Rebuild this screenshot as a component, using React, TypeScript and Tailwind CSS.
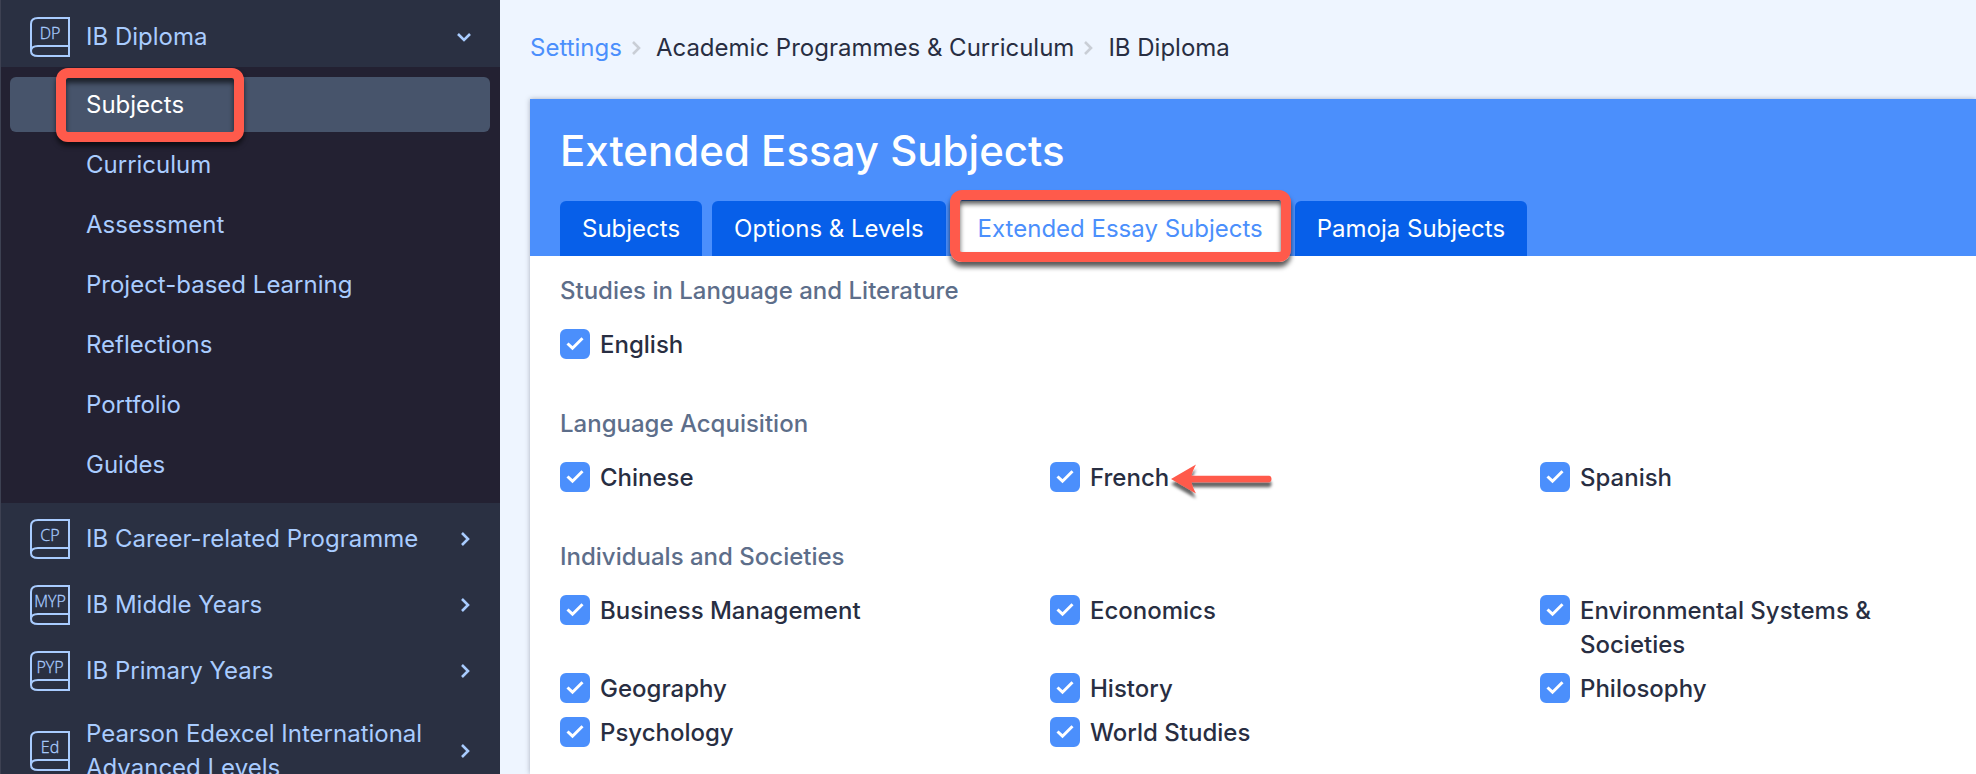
import React from "react";

const subItems = [
  "Subjects",
  "Curriculum",
  "Assessment",
  "Project-based Learning",
  "Reflections",
  "Portfolio",
  "Guides",
];

const programmes = [
  { code: "CP", label: "IB Career-related Programme" },
  { code: "MYP", label: "IB Middle Years" },
  { code: "PYP", label: "IB Primary Years" },
  { code: "Ed", label: "Pearson Edexcel International Advanced Levels" },
];

const tabs = ["Subjects", "Options & Levels", "Extended Essay Subjects", "Pamoja Subjects"];

const sections = [
  { title: "Studies in Language and Literature", subjects: ["English"] },
  { title: "Language Acquisition", subjects: ["Chinese", "French", "Spanish"] },
  {
    title: "Individuals and Societies",
    subjects: [
      "Business Management",
      "Economics",
      "Environmental Systems & Societies",
      "Geography",
      "History",
      "Philosophy",
      "Psychology",
      "World Studies",
    ],
  },
];

function BookIcon({ code }: { code: string }) {
  return (
    <svg width="40" height="40" viewBox="0 0 40 40" fill="none" className="shrink-0" aria-hidden="true">
      <path
        d="M1 34V7Q1 1 8 1H39V39H8Q1 39 1 34Q1 29 8 29H39"
        stroke="#a9ccff"
        strokeWidth="2"
      />
      <text
        x="20"
        y="22"
        textAnchor="middle"
        fill="#a9ccff"
        stroke="#a9ccff"
        strokeWidth="0.3"
        fontSize="16"
        fontWeight="300"
        fontFamily="'Open Sans', 'Noto Sans', sans-serif"
      >
        {code}
      </text>
    </svg>
  );
}

function Chevron({ className, down = false }: { className: string; down?: boolean }) {
  return (
    <svg width="16" height="16" viewBox="0 0 16 16" fill="none" className={className} aria-hidden="true">
      <path
        d={down ? "M2 5L8 11L14 5" : "M5 2L11 8L5 14"}
        stroke="currentColor"
        strokeWidth="2.6"
      />
    </svg>
  );
}

function Highlight({ className }: { className: string }) {
  return (
    <span
      aria-hidden="true"
      className={
        "pointer-events-none absolute z-10 rounded-xl border-10 border-[#ff5a4b] " + className
      }
    />
  );
}

function Arrow() {
  return (
    <svg
      width="110"
      height="44"
      viewBox="0 0 110 44"
      className="absolute top-0 left-full overflow-visible"
      aria-hidden="true"
    >
      <defs>
        <filter id="arrow-shadow" x="-20%" y="-50%" width="140%" height="220%">
          <feDropShadow dx="0" dy="5" stdDeviation="1.6" floodColor="#000" floodOpacity="0.6" />
        </filter>
      </defs>
      <path
        d="M2 18L27 3.500Q23 11 22.500 14.800H100Q102.500 15 102.500 18Q102.500 21 100 21.200H22.500Q23 25 27 32.500Z"
        fill="#ff5a4b"
        filter="url(#arrow-shadow)"
      />
    </svg>
  );
}

function SubjectBox({ label }: { label: string }) {
  return (
    <label className="flex items-start gap-2.5">
      <span className="mt-px grid shrink-0">
        <input
          type="checkbox"
          defaultChecked
          className="peer col-start-1 row-start-1 size-[30px] appearance-none rounded-md border-2 border-[#4b8ffc] bg-white checked:bg-[#4b8ffc]"
        />
        <svg
          viewBox="0 0 30 30"
          fill="none"
          className="pointer-events-none invisible col-start-1 row-start-1 size-[30px] peer-checked:visible"
          aria-hidden="true"
        >
          <path d="M7.500 14.500L12.500 19.200L22.500 9.300" stroke="#fff" strokeWidth="3" />
        </svg>
      </span>
      <span className="relative">
        {label}
        {label === "French" && <Arrow />}
      </span>
    </label>
  );
}

function Sidebar() {
  return (
    <aside className="w-[500px] shrink-0 overflow-hidden border-l border-[#3d4152] bg-[#2a3042] text-[#a9ccff]">
      <button
        type="button"
        aria-expanded="true"
        className="flex w-full items-center gap-4 pt-[17px] pr-7 pb-[10px] pl-[29px] text-left"
      >
        <BookIcon code="DP" />
        <span className="flex-1">IB Diploma</span>
        <Chevron down className="" />
      </button>
      <nav aria-label="IB Diploma" className="flex flex-col gap-[5px] bg-[#232132] pt-2.5 pr-2.5 pb-[11px] pl-[9px]">
        {subItems.map((item) => (
          <a
            key={item}
            href="#"
            className={
              item === "Subjects"
                ? "relative rounded-md bg-[#47546b] py-[10px] pl-[76px] leading-[35px] text-white"
                : "relative rounded-md py-[10px] pl-[76px] leading-[35px]"
            }
          >
            {item}
            {item === "Subjects" && (
              <Highlight className="-top-[9px] left-[46px] h-[74px] w-[188px] shadow-[0_4px_5px_rgba(0,0,0,0.6),inset_0_5px_5px_rgba(0,0,0,0.6)]" />
            )}
          </a>
        ))}
      </nav>
      <div className="pt-[3px]">
        {programmes.map(({ code, label }) => (
          <button
            key={code}
            type="button"
            className="flex w-full items-center gap-4 py-[13px] pr-[27px] pl-[29px] text-left"
          >
            <BookIcon code={code} />
            <span className="flex-1">{label}</span>
            <Chevron className="" />
          </button>
        ))}
      </div>
    </aside>
  );
}

export default function App() {
  return (
    <div className="flex h-screen overflow-hidden bg-[#eef5ff] font-['Inter',sans-serif] text-2xl leading-[34px] text-[#282e42]">
      <Sidebar />
      <main className="flex min-w-0 flex-1 flex-col pl-[30px]">
        <nav aria-label="Breadcrumb" className="flex items-center py-[31px]">
          <a href="#" className="text-[#4b8ffc]">
            Settings
          </a>
          <Chevron className="mr-3 ml-1.5 text-[#c9ced6]" />
          <span>Academic Programmes &amp; Curriculum</span>
          <Chevron className="mr-3 ml-1.5 text-[#c9ced6]" />
          <span>IB Diploma</span>
        </nav>
        <div className="mt-[3px] flex-1 bg-white shadow-[0_0_5px_rgba(40,46,66,0.35)]">
          <header className="bg-[#4b8ffc] px-[30px] pt-[22px] text-white">
            <h1 className="text-[42px] leading-[60px] font-medium">Extended Essay Subjects</h1>
            <div role="tablist" className="mt-5 flex gap-2.5">
              {tabs.map((tab) => {
                const active = tab === "Extended Essay Subjects";
                return (
                  <button
                    key={tab}
                    type="button"
                    role="tab"
                    aria-selected={active}
                    className={
                      active
                        ? "relative h-[55px] rounded-t-md bg-white px-[22px] text-[#4b8ffc]"
                        : "relative h-[55px] rounded-t-md bg-[#075fe9] px-[22px]"
                    }
                  >
                    {tab}
                    {active && (
                      <Highlight className="-inset-x-[6px] -top-[11px] h-[72px] shadow-[0_5px_5px_rgba(0,0,0,0.65),inset_0_4px_5px_rgba(0,0,0,0.65)]" />
                    )}
                  </button>
                );
              })}
            </div>
          </header>
          <div className="flex flex-col gap-[45px] pt-[18px] pl-[30px]">
            {sections.map((section) => (
              <section key={section.title}>
                <h2 className="mb-5 font-medium text-[#5d6e8a]">{section.title}</h2>
                <div className="grid grid-cols-3 gap-x-[54px] gap-y-2.5 font-medium">
                  {section.subjects.map((subject) => (
                    <SubjectBox key={subject} label={subject} />
                  ))}
                </div>
              </section>
            ))}
          </div>
        </div>
      </main>
    </div>
  );
}
